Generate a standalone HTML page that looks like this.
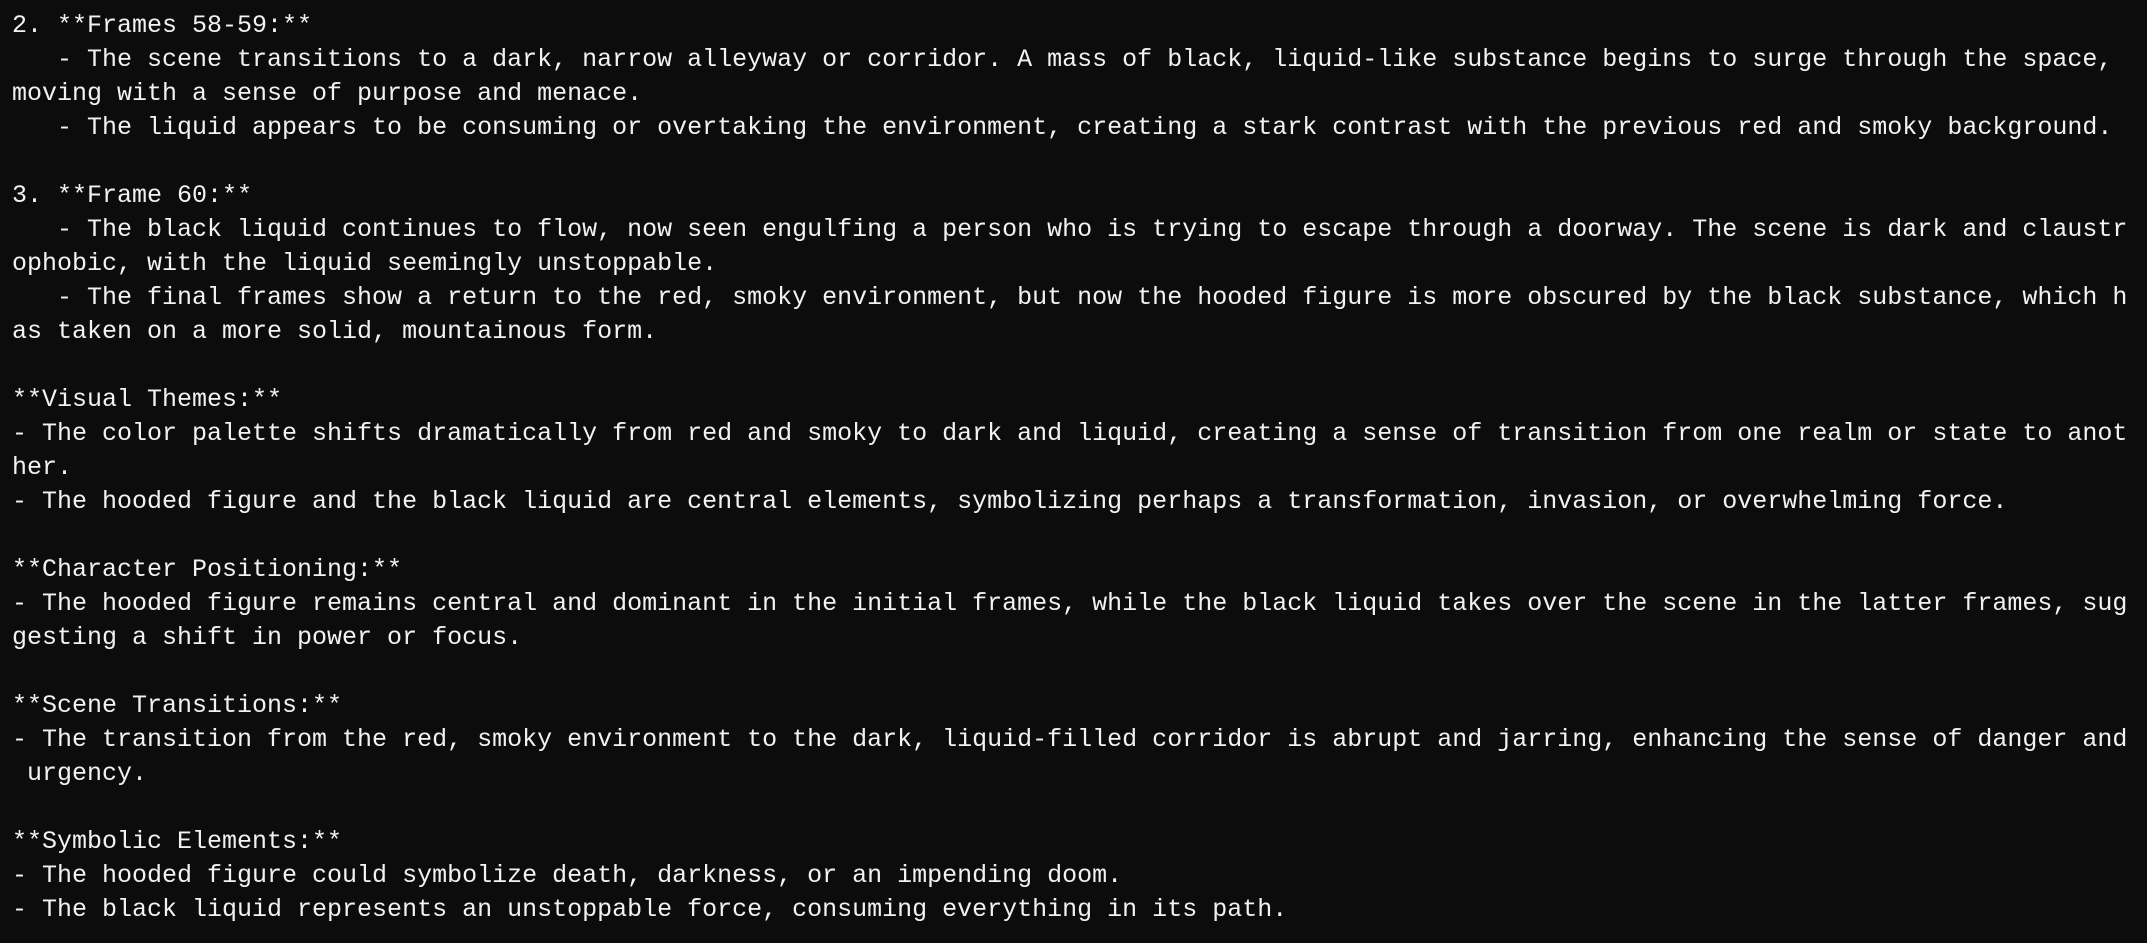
<!DOCTYPE html>
<html><head><meta charset="utf-8"><style>
html,body{margin:0;padding:0;background:#0c0c0c;width:2147px;height:943px;overflow:hidden}
pre{margin:0;padding:9px 0 0 12px;font-family:"Liberation Mono",monospace;font-size:25px;line-height:34px;color:#f2f2f2;white-space:pre}
</style></head><body><pre>2. **Frames 58-59:**
   - The scene transitions to a dark, narrow alleyway or corridor. A mass of black, liquid-like substance begins to surge through the space,
moving with a sense of purpose and menace.
   - The liquid appears to be consuming or overtaking the environment, creating a stark contrast with the previous red and smoky background.

3. **Frame 60:**
   - The black liquid continues to flow, now seen engulfing a person who is trying to escape through a doorway. The scene is dark and claustr
ophobic, with the liquid seemingly unstoppable.
   - The final frames show a return to the red, smoky environment, but now the hooded figure is more obscured by the black substance, which h
as taken on a more solid, mountainous form.

**Visual Themes:**
- The color palette shifts dramatically from red and smoky to dark and liquid, creating a sense of transition from one realm or state to anot
her.
- The hooded figure and the black liquid are central elements, symbolizing perhaps a transformation, invasion, or overwhelming force.

**Character Positioning:**
- The hooded figure remains central and dominant in the initial frames, while the black liquid takes over the scene in the latter frames, sug
gesting a shift in power or focus.

**Scene Transitions:**
- The transition from the red, smoky environment to the dark, liquid-filled corridor is abrupt and jarring, enhancing the sense of danger and
 urgency.

**Symbolic Elements:**
- The hooded figure could symbolize death, darkness, or an impending doom.
- The black liquid represents an unstoppable force, consuming everything in its path.</pre></body></html>
